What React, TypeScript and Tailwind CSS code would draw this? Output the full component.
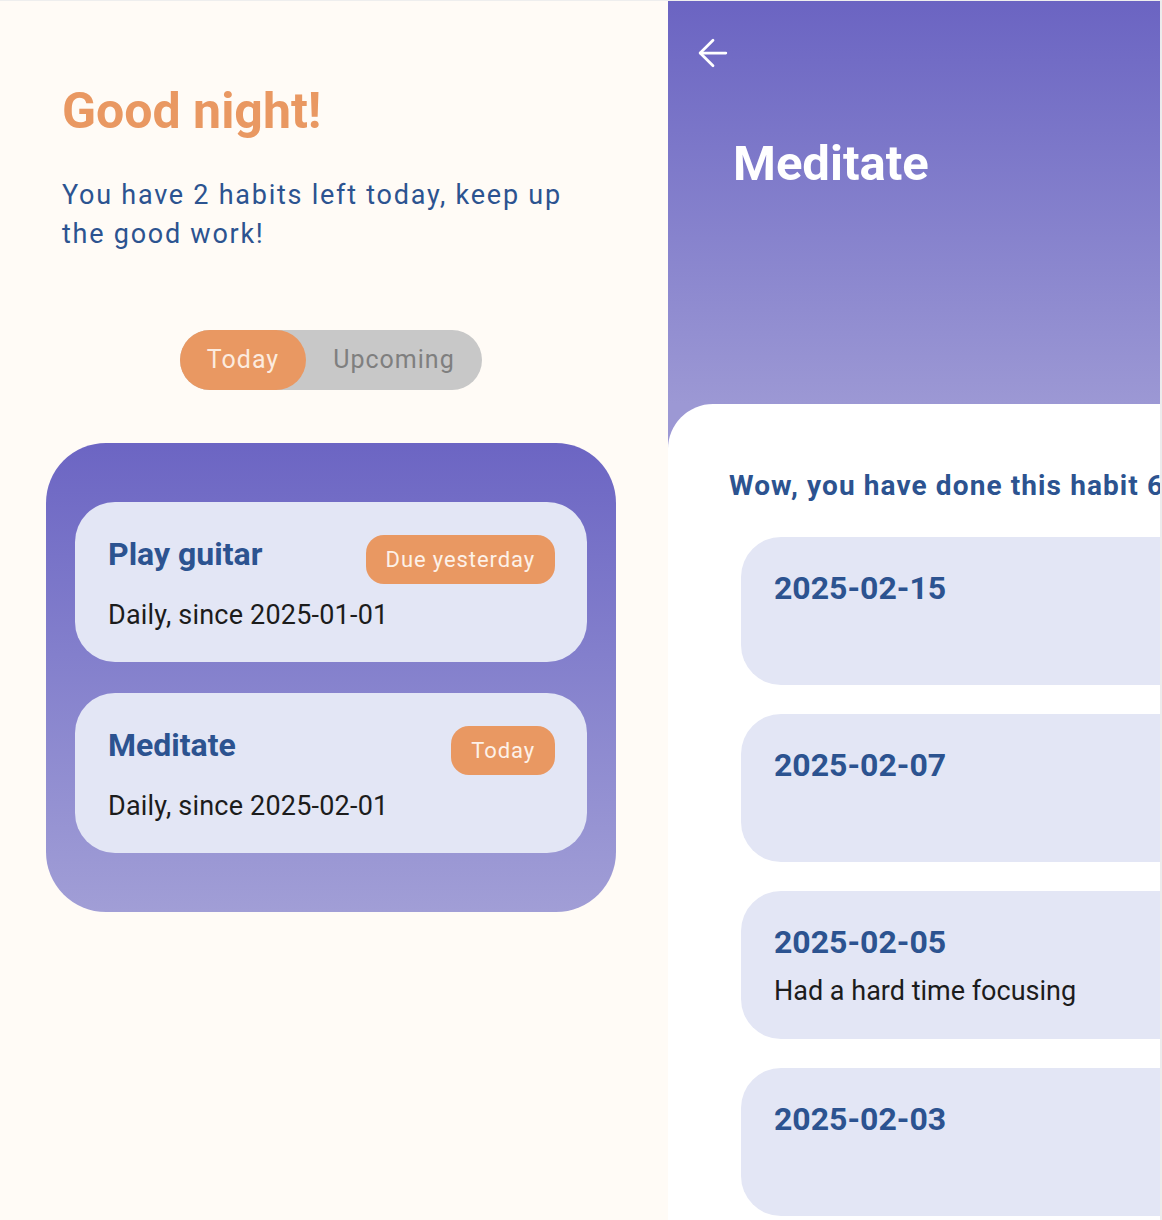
import { ArrowLeft } from "lucide-react";

const habits = [
  { name: "Play guitar", badge: "Due yesterday", since: "Daily, since 2025-01-01" },
  { name: "Meditate", badge: "Today", since: "Daily, since 2025-02-01" },
];

const entries = [
  { date: "2025-02-15", note: "" },
  { date: "2025-02-07", note: "" },
  { date: "2025-02-05", note: "Had a hard time focusing" },
  { date: "2025-02-03", note: "" },
];

function HabitCard({ name, badge, since }: { name: string; badge: string; since: string }) {
  return (
    <div className="h-[160px] rounded-[40px] bg-[#e3e6f5] pl-[33px] pr-[32px] pt-[33px]">
      <div className="flex items-start justify-between">
        <h3 className="text-[32px] font-bold leading-[38px] text-[#2c5390]">{name}</h3>
        <span className="flex h-[49px] items-center rounded-[18px] bg-[#e99862] px-[20px] text-[22px] tracking-[0.9px] text-[#fdf1e8]">
          {badge}
        </span>
      </div>
      <p className="mt-[14px] text-[27px] leading-[34px] tracking-[0.2px] text-[#1c1c1c]">{since}</p>
    </div>
  );
}

function HomeScreen() {
  return (
    <section className="h-full w-[668px] shrink-0 bg-[#fffbf6] pl-[62px] pt-[81px]">
      <h1 className="text-[50px] font-bold leading-[58px] text-[#e99862]">Good night!</h1>
      <p className="mt-[36px] w-[530px] text-[27px] leading-[39px] tracking-[1.75px] text-[#2c5390]">
        You have 2 habits left today, keep up the good work!
      </p>

      <div className="ml-[118px] mt-[76px] flex h-[60px] w-[302px] rounded-full bg-[#c8c8c8] text-[25px] tracking-[1px]">
        <div className="flex w-[126px] items-center justify-center rounded-full bg-[#e99862] text-[#fcebdf]">
          Today
        </div>
        <div className="flex flex-1 items-center justify-center text-[#7f7f7f]">Upcoming</div>
      </div>

      <div className="-ml-[16px] mt-[53px] flex w-[570px] flex-col gap-[31px] rounded-[60px] bg-gradient-to-b from-[#6c65c3] to-[#a19ed6] px-[29px] py-[59px]">
        {habits.map((h) => (
          <HabitCard key={h.name} {...h} />
        ))}
      </div>
    </section>
  );
}

function DetailScreen() {
  return (
    <section className="flex h-full flex-1 flex-col overflow-hidden border-r-2 border-[#ececec] bg-[#9c98d4]">
      <div className="h-[403px] shrink-0 bg-gradient-to-b from-[#6b64c2] to-[#9c98d4] pl-[23px] pt-[30px]">
        <ArrowLeft size={44} strokeWidth={1.5} className="text-white" />
        <h1 className="ml-[42px] mt-[61px] text-[49px] font-bold leading-[56px] text-white">Meditate</h1>
      </div>
      <div className="flex-1 overflow-hidden rounded-tl-[45px] bg-white pl-[61px] pt-[65px]">
        <p className="whitespace-nowrap text-[28px] font-bold leading-[34px] tracking-[1.1px] text-[#2c5390]">
          Wow, you have done this habit 6 times!
        </p>
        <div className="ml-[12px] mt-[34px] flex w-[520px] flex-col gap-[29px]">
          {entries.map((e) => (
            <div key={e.date} className="h-[148px] rounded-[40px] bg-[#e3e6f5] pl-[33px] pt-[31px]">
              <div className="text-[32px] font-bold leading-[40px] text-[#2c5390]">{e.date}</div>
              {e.note && <div className="mt-[12px] text-[27px] leading-[34px] text-[#1c1c1c]">{e.note}</div>}
            </div>
          ))}
        </div>
      </div>
    </section>
  );
}

export default function App() {
  return (
    <div className="flex h-[1220px] w-[1162px] overflow-hidden border-t border-[#eeeeee] font-['Roboto',sans-serif]">
      <HomeScreen />
      <DetailScreen />
    </div>
  );
}
